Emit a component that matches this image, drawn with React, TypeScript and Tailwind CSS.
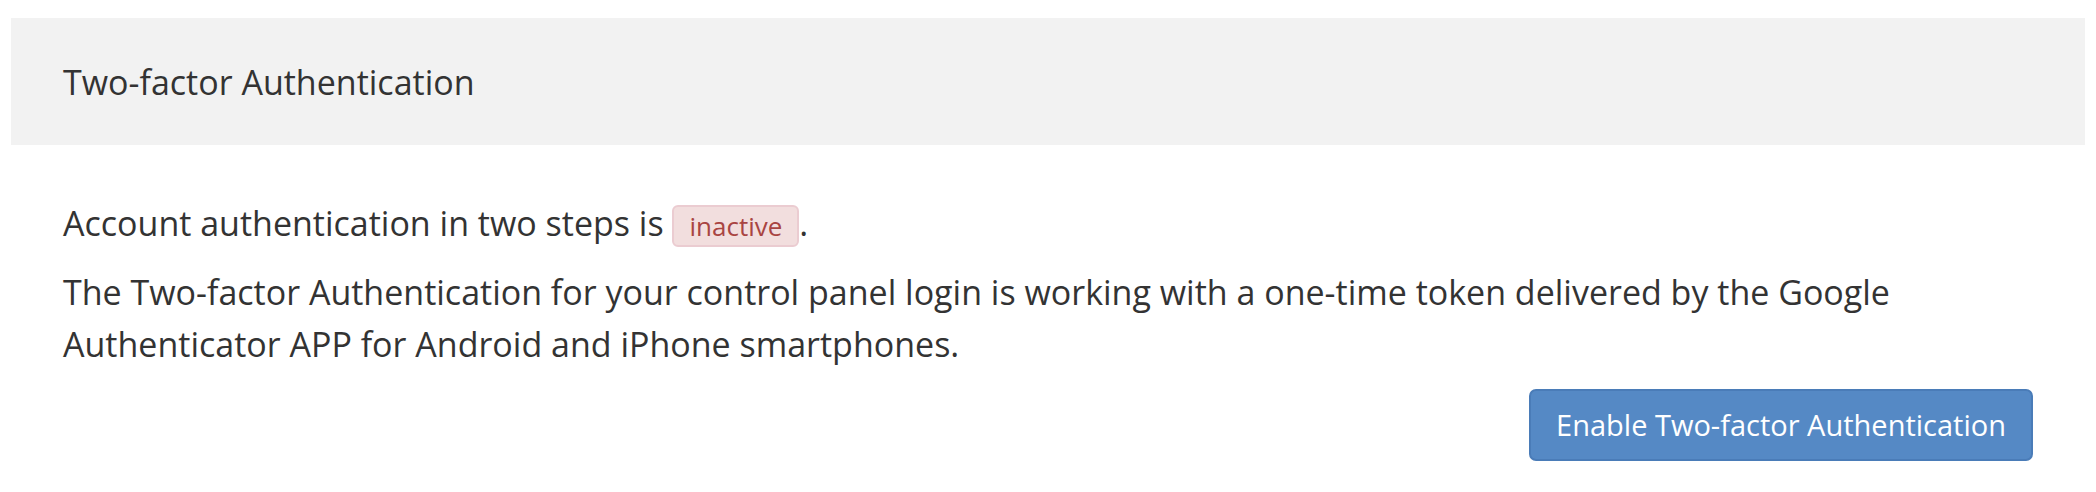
import React from 'react';

export default function App() {
    return (
        <div className="min-h-screen bg-white px-[11px] pt-[18px] pb-[31px] text-[#333333]" style={{ fontFamily: '"Open Sans", "Noto Sans", sans-serif' }}>
            {/* Panel heading */}
            <div className="flex h-[127px] items-center bg-[#f2f2f2] px-[52px]">
                <h3 className="text-[34px] leading-none font-normal">Two-factor Authentication</h3>
            </div>

            {/* Panel body */}
            <div className="px-[52px] pt-[52px]">
                <p className="mb-[17px] text-[34px] leading-[52px]">
                    Account authentication in two steps is{' '}
                    <span className="relative -top-[1px] inline-block rounded-[6px] border-2 border-[#ebccd1] bg-[#f2dede] px-[15px] align-middle text-[26px] leading-[38px] text-[#a94442]">
                        inactive
                    </span>
                    .
                </p>
                <p className="text-[34px] leading-[52px]">
                    The Two-factor Authentication for your control panel login is working with a one-time token delivered by the Google
                    Authenticator APP for Android and iPhone smartphones.
                </p>
                <div className="mt-[19px] flex justify-end">
                    <button className="h-[72px] rounded-[7px] border-2 border-[#4a7cb8] bg-[#5589c5] px-[25px] text-[29px] text-white">
                        Enable Two-factor Authentication
                    </button>
                </div>
            </div>
        </div>
    );
}
